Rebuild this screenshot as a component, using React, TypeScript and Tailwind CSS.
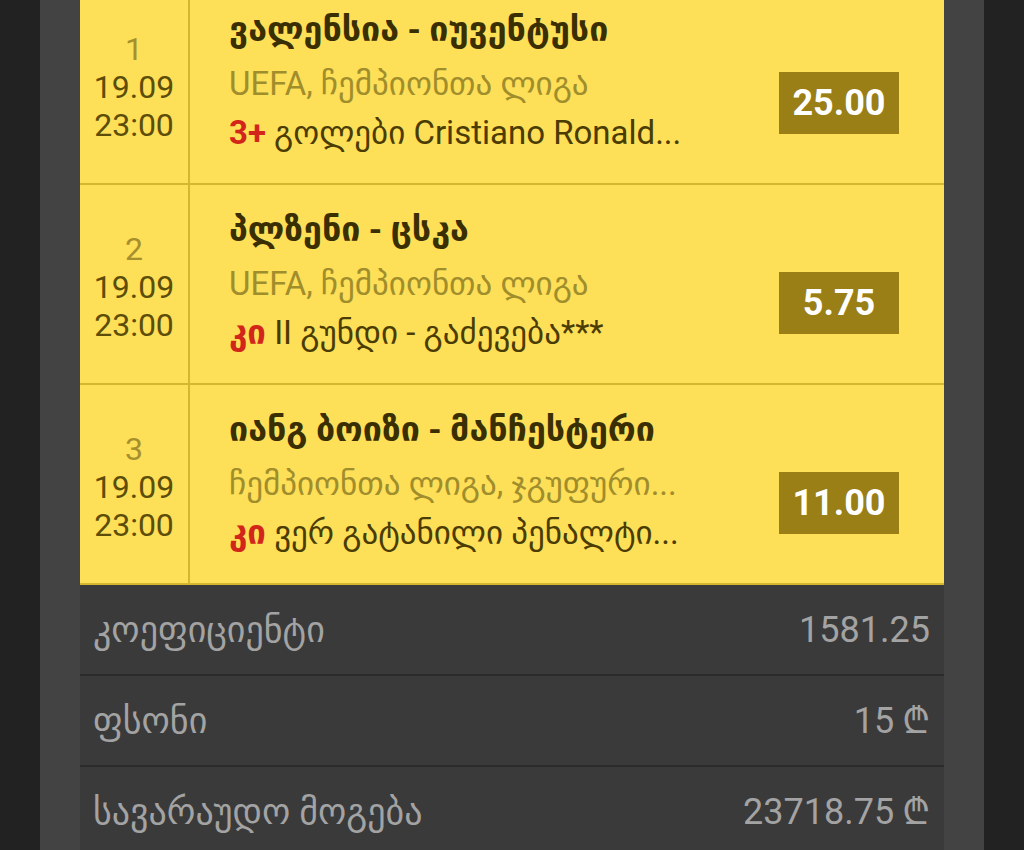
import React from 'react'

type Bet = {
  n: number
  title: string
  league: string
  tag: string
  pick: string
  odds: string
}

const bets: Bet[] = [
  {
    n: 1,
    title: 'ვალენსია - იუვენტუსი',
    league: 'UEFA, ჩემპიონთა ლიგა',
    tag: '3+',
    pick: 'გოლები Cristiano Ronald...',
    odds: '25.00',
  },
  {
    n: 2,
    title: 'პლზენი - ცსკა',
    league: 'UEFA, ჩემპიონთა ლიგა',
    tag: 'კი',
    pick: 'II გუნდი - გაძევება***',
    odds: '5.75',
  },
  {
    n: 3,
    title: 'იანგ ბოიზი - მანჩესტერი',
    league: 'ჩემპიონთა ლიგა, ჯგუფური...',
    tag: 'კი',
    pick: 'ვერ გატანილი პენალტი...',
    odds: '11.00',
  },
]

const totals = [
  { label: 'კოეფიციენტი', value: '1581.25', lari: false },
  { label: 'ფსონი', value: '15', lari: true },
  { label: 'სავარაუდო მოგება', value: '23718.75', lari: true },
]

function BetRow({ bet }: { bet: Bet }) {
  return (
    <div className="flex h-[200px] border-b-2 border-[#d6b630]">
      <div className="flex w-[110px] shrink-0 flex-col items-center justify-center border-r-2 border-[#d6b630] pt-[5px] text-[32px] leading-[38px]">
        <span className="text-[#a68f2c]">{bet.n}</span>
        <span className="text-[#5c4d08]">19.09</span>
        <span className="text-[#5c4d08]">23:00</span>
      </div>
      <div className="flex min-w-0 flex-1 flex-col pl-[39px] pt-[24px]">
        <div className="text-[34px] font-bold leading-[40px] text-[#3a2f02]">
          {bet.title}
        </div>
        <div className="mt-[11px] w-[475px] truncate text-[33px] leading-[48px] text-[#a08d2c]">
          {bet.league}
        </div>
        <div className="w-[475px] truncate text-[33px] leading-[50px] text-[#4a3c02]">
          <span className="font-bold text-[#d2261a]">{bet.tag}</span> {bet.pick}
        </div>
      </div>
      <div className="mr-[45px] mt-[87px] flex h-[62px] w-[120px] shrink-0 items-center justify-center bg-[#9a7e16] text-[36px] font-bold text-white">
        {bet.odds}
      </div>
    </div>
  )
}

export default function App() {
  return (
    <div
      className="h-[850px] overflow-hidden bg-[#222222] px-[40px]"
      style={{ fontFamily: 'Roboto, "DejaVu Sans", "Noto Sans", sans-serif' }}
    >
      <div className="flex h-full flex-col bg-[#434343] px-[40px]">
        <div className="-mt-[15px] bg-[#fedf58]">
          {bets.map((b) => (
            <BetRow key={b.n} bet={b} />
          ))}
        </div>
        <div className="flex-1 bg-[#3a3a3a] text-[#a3a3a3]">
          {totals.map((t) => (
            <div
              key={t.label}
              className="flex h-[91px] items-center justify-between border-b-2 border-[#2b2b2b] pl-[13px] pr-[14px]"
            >
              <span className="text-[36px]">{t.label}</span>
              <span className="text-[36px]">
                {t.value}
                {t.lari && <span className="ml-[8px]">₾</span>}
              </span>
            </div>
          ))}
        </div>
      </div>
    </div>
  )
}
